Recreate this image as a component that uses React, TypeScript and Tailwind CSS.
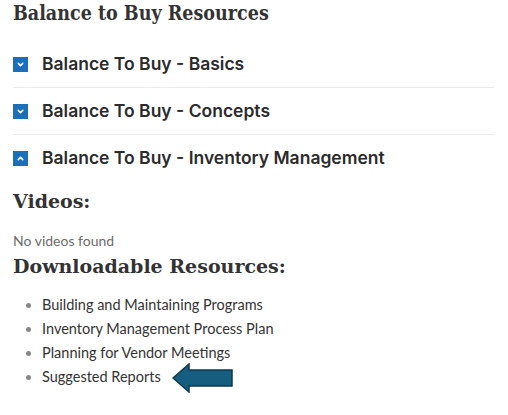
import { ChevronDown, ChevronUp } from "lucide-react";

const sections = [
  { title: "Balance To Buy - Basics", open: false },
  { title: "Balance To Buy - Concepts", open: false },
  { title: "Balance To Buy - Inventory Management", open: true },
];

const resources = [
  "Building and Maintaining Programs",
  "Inventory Management Process Plan",
  "Planning for Vendor Meetings",
  "Suggested Reports",
];

const ArrowLeft = () => (
  <svg
    width="62"
    height="30"
    viewBox="0 0 62 30"
    className="absolute left-full top-[calc(50%+1px)] -translate-y-1/2 ml-[11px]"
  >
    <polygon
      points="1,15 17,1 17,7 60,7 60,23 17,23 17,29"
      fill="#155e80"
      stroke="#0d3a4f"
      strokeWidth="1.5"
    />
  </svg>
);

const heading =
  "font-['DejaVu_Serif',serif] font-bold text-[19px] leading-[26px] text-[#333]";

export default function App() {
  return (
    <div className="w-[508px] h-[415px] bg-white pl-[13px] pr-[14px] overflow-hidden">
      <h1 className="font-['DejaVu_Serif_Condensed','DejaVu_Serif',serif] [font-stretch:condensed] font-bold text-[19.5px] leading-[26px] text-[#333] pt-[1px]">
        Balance to Buy Resources
      </h1>

      {/* Accordion */}
      <div className="mt-[14px]">
        {sections.map((s, i) => (
          <div
            key={s.title}
            className={
              i < sections.length - 1
                ? "flex items-center h-[47px] border-b border-[#ececec]"
                : "flex items-center h-[47px]"
            }
          >
            <span className="w-[15px] h-[15px] bg-[#1a6fb8] flex items-center justify-center shrink-0">
              {s.open ? (
                <ChevronUp className="w-[9px] h-[9px] text-white" strokeWidth={4} />
              ) : (
                <ChevronDown className="w-[9px] h-[9px] text-white" strokeWidth={4} />
              )}
            </span>
            <span className="ml-[14px] font-['Inter',sans-serif] font-semibold text-[17.5px] text-[#2b2b2b]">
              {s.title}
            </span>
          </div>
        ))}
      </div>

      <h2 className={`${heading} mt-[6px]`}>Videos:</h2>
      <p className="mt-[17px] font-['Lato',sans-serif] text-[14px] leading-[20px] text-[#6b6b6b]">
        No videos found
      </p>
      <h2 className={`${heading} mt-[2px]`}>Downloadable Resources:</h2>

      <ul className="mt-[14px] pl-[29px] list-disc marker:text-[#888] font-['Lato',sans-serif] text-[14.5px] text-[#333]">
        {resources.map((r, i) => (
          <li key={r} className="h-[24px] leading-[24px]">
            <span className="relative">
              {r}
              {i === resources.length - 1 && <ArrowLeft />}
            </span>
          </li>
        ))}
      </ul>
    </div>
  );
}
